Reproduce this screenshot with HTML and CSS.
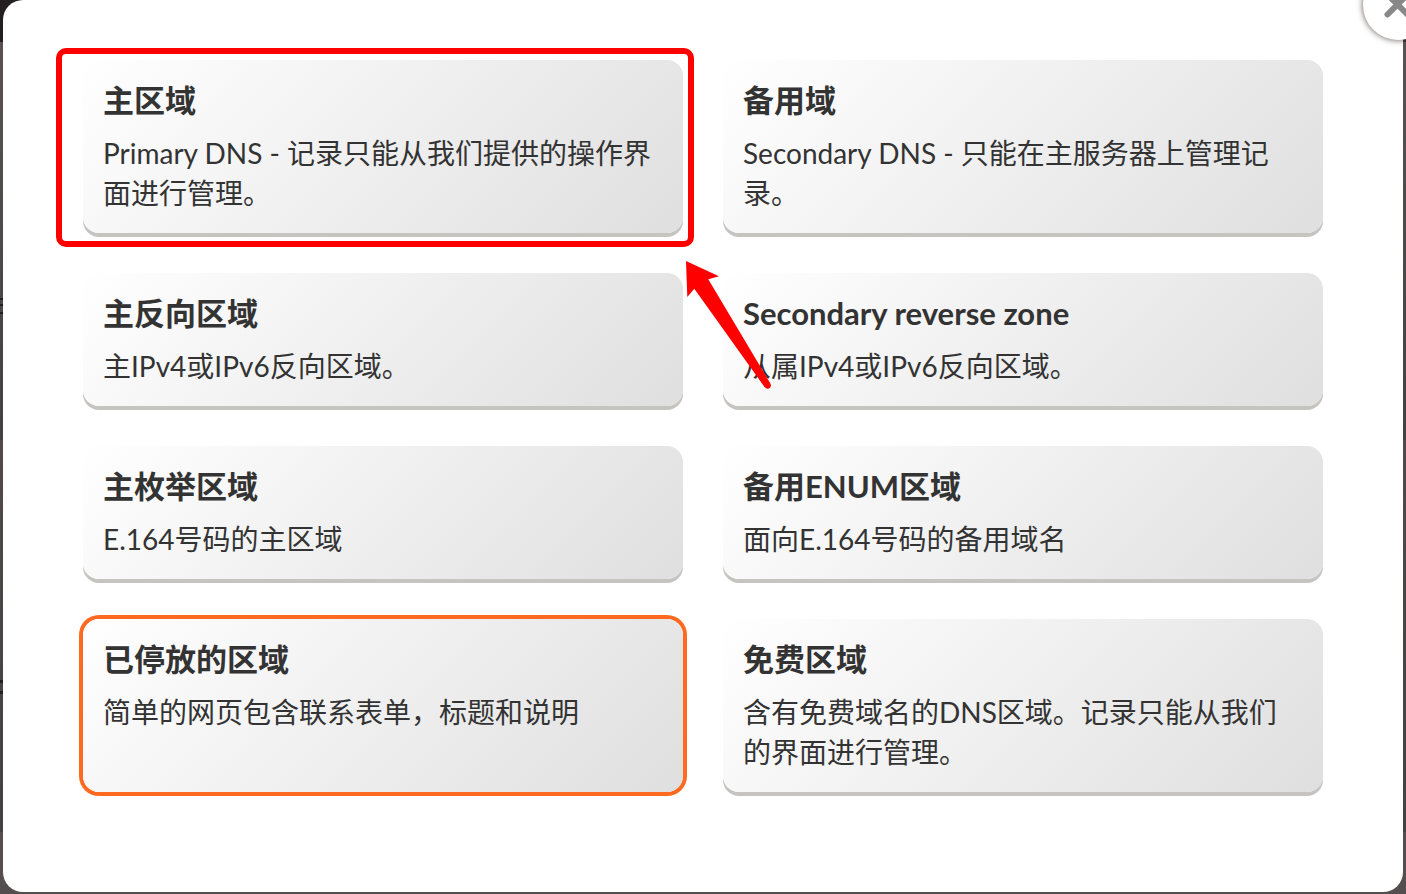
FILE: index.html
```html
<!DOCTYPE html>
<html lang="zh-CN">
<head>
<meta charset="utf-8">
<meta name="viewport" content="width=device-width, initial-scale=1">
<title>DNS</title>
<link rel="stylesheet" href="styles.css">
</head>
<body>
<main class="modal">
  <button class="close" type="button" aria-label="关闭">
    <svg class="close-icon" viewBox="0 0 24 24" aria-hidden="true"><path d="M1.500 1.500L21.500 21.500M21.500 1.500L1.500 21.500"/></svg>
  </button>
  <div class="zones">
    <a class="zone marked" href="#">
      <h2 class="zone-title">主区域</h2>
      <p class="zone-text">Primary DNS - 记录只能从我们提供的操作界面进行管理。</p>
      <svg class="arrow" viewBox="0 0 86 128" aria-hidden="true"><path d="M0 0L33 15.300L22.300 18.300L84.400 122.500Q86 126 83 127.500Q80.500 128.500 78.500 126L8.300 27.700L1.300 36Z"/></svg>
    </a>
    <a class="zone" href="#">
      <h2 class="zone-title">备用域</h2>
      <p class="zone-text">Secondary DNS - 只能在主服务器上管理记录。</p>
    </a>
    <a class="zone" href="#">
      <h2 class="zone-title">主反向区域</h2>
      <p class="zone-text">主IPv4或IPv6反向区域。</p>
    </a>
    <a class="zone" href="#">
      <h2 class="zone-title">Secondary reverse zone</h2>
      <p class="zone-text">从属IPv4或IPv6反向区域。</p>
    </a>
    <a class="zone" href="#">
      <h2 class="zone-title">主枚举区域</h2>
      <p class="zone-text">E.164号码的主区域</p>
    </a>
    <a class="zone" href="#">
      <h2 class="zone-title">备用ENUM区域</h2>
      <p class="zone-text">面向E.164号码的备用域名</p>
    </a>
    <a class="zone active" href="#">
      <h2 class="zone-title">已停放的区域</h2>
      <p class="zone-text">简单的网页包含联系表单，标题和说明</p>
    </a>
    <a class="zone" href="#">
      <h2 class="zone-title">免费区域</h2>
      <p class="zone-text">含有免费域名的DNS区域。记录只能从我们的界面进行管理。</p>
    </a>
  </div>
</main>
</body>
</html>
```
FILE: styles.css
```css
* {
  box-sizing: border-box;
}

body {
  margin: 0;
  min-height: 100vh;
  padding: 0 3px 2px;
  display: flex;
  overflow: hidden;
  background:
    linear-gradient(#231f20, #231f20) 0 298px / 3px 2px no-repeat,
    linear-gradient(#231f20, #231f20) 0 304px / 3px 2px no-repeat,
    linear-gradient(#231f20, #231f20) 0 312px / 3px 2px no-repeat,
    linear-gradient(#231f20, #231f20) 0 680px / 3px 3px no-repeat,
    linear-gradient(#231f20, #231f20) 0 691px / 3px 3px no-repeat,
    linear-gradient(#231f20 42px, #585252 42px, #454142 440px, #504a4a 440px, #454142 832px, #544e4e 832px);
  color: #333;
  font-family: Lato, "Noto Sans CJK SC", sans-serif;
}

.modal {
  position: relative;
  flex: 1;
  padding: 60px 80px;
  border-radius: 20px;
  background: #fff;
}

.close {
  position: absolute;
  top: -30px;
  right: -30px;
  width: 70px;
  height: 70px;
  padding: 0;
  display: grid;
  place-items: center;
  border: 0;
  border-radius: 50%;
  background: #fff;
  box-shadow: 0 0 6px #605050;
}

.close-icon {
  width: 24px;
  height: 24px;
  overflow: visible;
  fill: none;
  stroke: #888;
  stroke-width: 6;
  stroke-linecap: round;
}

.zones {
  display: grid;
  grid-template-columns: 1fr 1fr;
  gap: 40px;
}

.zone {
  position: relative;
  padding: 20px;
  border-radius: 16px;
  background: linear-gradient(135deg, #fff, #dfdfdf);
  box-shadow: 0 4px #c5c4c0;
  color: inherit;
  text-decoration: none;
}

.zone.active {
  box-shadow: 0 0 0 4px #ff6a20;
}

.marked {
  z-index: 1;
}

.marked::after {
  content: "";
  position: absolute;
  inset: -12px -11px -14px -27px;
  border: 6px solid #f00;
  border-radius: 10px;
}

.zone-title {
  margin: 0 0 13px;
  font-size: 31px;
  line-height: 40px;
  font-weight: 700;
}

.zone-text {
  margin: 0;
  font-size: 28px;
  line-height: 40px;
}

.arrow {
  position: absolute;
  top: 201px;
  right: -89px;
  width: 86px;
  height: 128px;
  overflow: visible;
  fill: #f00;
}
```
